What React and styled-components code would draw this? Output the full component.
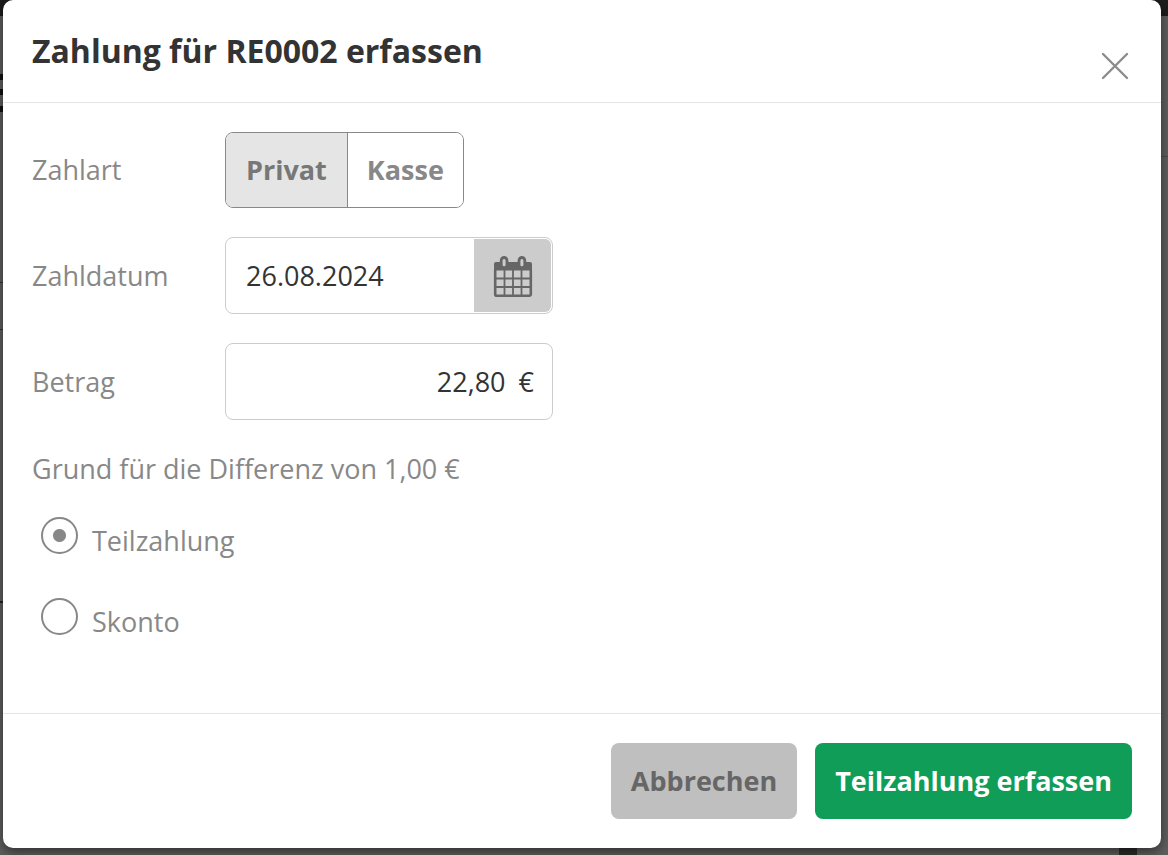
import React from "react";
import styled, { createGlobalStyle } from "styled-components";
import { useState } from 'react';

const GlobalStyle = createGlobalStyle`
  *, *::before, *::after {
    box-sizing: border-box;
  }

  body {
    margin: 0;
    font-family: "Open Sans", sans-serif;
    font-size: 27px;
    line-height: 40px;
    color: #888;
    background: #5f5f5f;
  }

  button, input {
    font: inherit;
    color: inherit;
  }
`;

// dimmed page behind the dialog, only its edges stay visible
const Backdrop = styled.div`
  min-height: 100vh;
  padding: 0 7px 7px 3px;
  background-color: #5f5f5f;
  background-image:
    linear-gradient(#1c1c1c, #1c1c1c),
    linear-gradient(#111, #111),
    linear-gradient(#111, #111),
    linear-gradient(#111, #111),
    linear-gradient(#333, #333),
    linear-gradient(#333, #333),
    linear-gradient(#222, #222),
    linear-gradient(#4c4c4c, #4c4c4c),
    linear-gradient(#2c2c2c, #2c2c2c);
  background-repeat: no-repeat;
  background-size: 100% 16px, 3px 6px, 3px 6px, 3px 6px, 3px 1px, 3px 1px, 3px 2px, 7px 1px, 18px 7px;
  background-position: 0 0, 0 74px, 0 89px, 0 106px, 0 282px, 0 329px, 0 601px, right 156px, right 31px bottom;
`;

const Dialog = styled.form`
  background: #fff;
  border-radius: 10px;
  box-shadow: 0 4px 12px rgb(0 0 0 / 0.5);
`;

const Header = styled.header`
  display: flex;
  justify-content: space-between;
  padding: 29px 29px 22px;
  border-bottom: 1px solid #e5e5e5;
`;

const Title = styled.h1`
  margin: 0 0 7px;
  font-size: 32px;
  line-height: 44px;
  font-weight: 700;
  color: #333;
`;

const CloseButton = styled.button`
  display: flex;
  align-self: flex-end;
  padding: 0;
  border: 0;
  background: none;
  color: #8c8c8c;
  cursor: pointer;
`;

const Body = styled.div`
  display: flex;
  flex-direction: column;
  gap: 29px;
  padding: 29px 29px 71px;
`;

const Row = styled.div`
  display: grid;
  grid-template-columns: 193px minmax(0, 328px);
  align-items: center;
`;

const Toggle = styled.div`
  display: flex;
  justify-self: start;
  height: 76px;
  border: 1px solid #888;
  border-radius: 8px;
  overflow: hidden;
`;

const ToggleButton = styled.button`
  padding: 0 20px;
  border: 0;
  font-weight: 700;
  color: ${({ $active }) => ($active ? '#777' : '#888')};
  background: ${({ $active }) => ($active ? '#e5e5e5' : '#fff')};
  cursor: pointer;

  & + & {
    padding: 0 19px;
    border-left: 1px solid #888;
  }
`;

const Field = styled.div`
  display: flex;
  align-items: center;
  height: 77px;
  padding: 1px;
  border: 1px solid #ccc;
  border-radius: 8px;
  color: #333;
`;

const Input = styled.input`
  flex: 1;
  min-width: 0;
  padding: 0 13px 0 19px;
  border: 0;
  outline: 0;
  background: none;
  text-align: ${({ $align }) => $align || 'left'};
`;

const Suffix = styled.span`
  padding-right: 17px;
`;

const CalendarButton = styled.button`
  display: flex;
  align-items: center;
  justify-content: center;
  align-self: stretch;
  width: 77px;
  padding: 3px 0 0;
  border: 0;
  border-radius: 0 6px 6px 0;
  background: #ccc;
  color: #666;
  cursor: pointer;
`;

const Reasons = styled.fieldset`
  display: flex;
  flex-direction: column;
  gap: 37px;
  margin: 0;
  padding: 0;
  border: 0;
`;

const Legend = styled.legend`
  margin-bottom: 28px;
  padding: 0;
`;

const RadioLabel = styled.label`
  display: flex;
  align-items: flex-start;
  align-self: flex-start;
  gap: 14px;
  padding-left: 9px;
  cursor: pointer;
`;

const Radio = styled.input`
  appearance: none;
  flex: none;
  width: 37px;
  height: 37px;
  margin: 0;
  border: 2px solid #888;
  border-radius: 50%;

  &:checked {
    background: radial-gradient(circle, #888 6px, transparent 7px);
  }
`;

const RadioText = styled.span`
  padding-top: 4px;
`;

const Footer = styled.footer`
  display: flex;
  flex-wrap: wrap;
  justify-content: flex-end;
  gap: 18px;
  padding: 29px;
  border-top: 1px solid #e5e5e5;
`;

const Button = styled.button`
  height: 76px;
  padding: 0 20px;
  border: 0;
  border-radius: 8px;
  font-weight: 700;
  color: ${({ $primary }) => ($primary ? '#fff' : '#666')};
  background: ${({ $primary }) => ($primary ? '#0f9d58' : '#bfbfbf')};
  cursor: pointer;
`;

const CloseIcon = () => (
  <svg width="34" height="28" viewBox="0 0 34 28" fill="none" stroke="currentColor" strokeWidth="2.4" strokeLinecap="round" aria-hidden="true">
    <path d="M5 2l24 24M29 2L5 26" />
  </svg>
);

const CalendarIcon = () => (
  <svg width="40" height="42" viewBox="0 0 40 42" fill="none" stroke="currentColor" aria-hidden="true">
    <path d="M3 6h34a2 2 0 0 1 2 2v6.5H1V8a2 2 0 0 1 2-2z" fill="currentColor" stroke="none" />
    <path d="M2.2 14v24.3a1.5 1.5 0 0 0 1.5 1.5h32.6a1.5 1.5 0 0 0 1.5-1.5V14" strokeWidth="2.6" />
    <path d="M11.5 14v25M20 14v25M28.5 14v25M2 22.5h36M2 31h36" strokeWidth="1.8" />
    <rect x="8.2" y="1.5" width="5.8" height="10.2" rx="2.9" fill="#ccc" strokeWidth="2.8" />
    <rect x="26" y="1.5" width="5.8" height="10.2" rx="2.9" fill="#ccc" strokeWidth="2.8" />
  </svg>
);

const types = ['Privat', 'Kasse'];
const reasons = ['Teilzahlung', 'Skonto'];

const App = () => {
  const [type, setType] = useState('Privat');
  const [date, setDate] = useState('26.08.2024');
  const [amount, setAmount] = useState('22,80');
  const [reason, setReason] = useState('Teilzahlung');

  return (
    <Backdrop>
      <GlobalStyle />
      <Dialog role="dialog" aria-labelledby="title" onSubmit={(e) => e.preventDefault()}>
        <Header>
          <Title id="title">Zahlung für RE0002 erfassen</Title>
          <CloseButton type="button" aria-label="Schließen">
            <CloseIcon />
          </CloseButton>
        </Header>

        <Body>
          <Row>
            <span id="type">Zahlart</span>
            <Toggle role="group" aria-labelledby="type">
              {types.map((item) => (
                <ToggleButton
                  key={item}
                  type="button"
                  $active={type === item}
                  aria-pressed={type === item}
                  onClick={() => setType(item)}
                >
                  {item}
                </ToggleButton>
              ))}
            </Toggle>
          </Row>
          <Row>
            <label htmlFor="date">Zahldatum</label>
            <Field>
              <Input id="date" value={date} onChange={(e) => setDate(e.target.value)} />
              <CalendarButton type="button" aria-label="Kalender">
                <CalendarIcon />
              </CalendarButton>
            </Field>
          </Row>
          <Row>
            <label htmlFor="amount">Betrag</label>
            <Field>
              <Input id="amount" $align="right" value={amount} onChange={(e) => setAmount(e.target.value)} />
              <Suffix>€</Suffix>
            </Field>
          </Row>

          <Reasons>
            <Legend>Grund für die Differenz von 1,00 €</Legend>
            {reasons.map((item) => (
              <RadioLabel key={item}>
                <Radio
                  type="radio"
                  name="reason"
                  value={item}
                  checked={reason === item}
                  onChange={() => setReason(item)}
                />
                <RadioText>{item}</RadioText>
              </RadioLabel>
            ))}
          </Reasons>
        </Body>

        <Footer>
          <Button type="button">Abbrechen</Button>
          <Button type="submit" $primary>Teilzahlung erfassen</Button>
        </Footer>
      </Dialog>
    </Backdrop>
  );
};

export default App;
